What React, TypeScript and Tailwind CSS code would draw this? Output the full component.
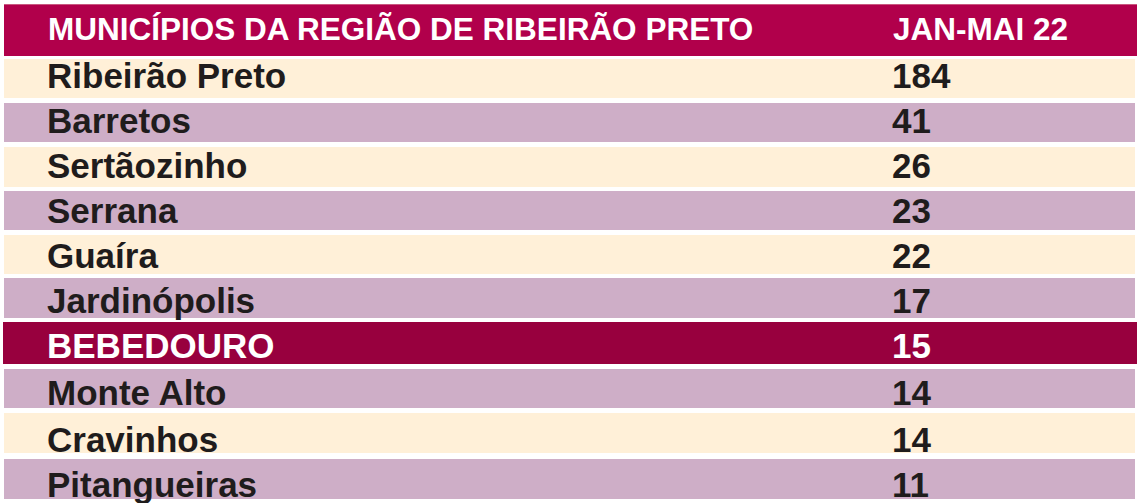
type Row = {
  name: string;
  value: number;
  box: string;
  text: string;
  highlight?: boolean;
};

// row geometry follows the scanned table, which is not perfectly regular
const rows: Row[] = [
  { name: 'Ribeirão Preto', value: 184, box: 'mt-[3px] h-[39px] bg-[#fff0d8]', text: 'pt-0' },
  { name: 'Barretos', value: 41, box: 'mt-[5px] h-[39px] bg-[#ceaec7]', text: 'pt-px' },
  { name: 'Sertãozinho', value: 26, box: 'mt-[5px] h-[40px] bg-[#fff0d8]', text: 'pt-0.5' },
  { name: 'Serrana', value: 23, box: 'mt-[4px] h-[39px] bg-[#ceaec7]', text: 'pt-[3px]' },
  { name: 'Guaíra', value: 22, box: 'mt-[5px] h-[39px] bg-[#fff0d8]', text: 'pt-1' },
  { name: 'Jardinópolis', value: 17, box: 'mt-[4px] h-[40px] bg-[#ceaec7]', text: 'pt-1.5' },
  { name: 'BEBEDOURO', value: 15, box: 'mt-[4px] h-[42px] bg-[#98003e]', text: 'pt-[7px]', highlight: true },
  { name: 'Monte Alto', value: 14, box: 'mt-[5px] h-[39px] bg-[#ceaec7]', text: 'pt-[7px]' },
  { name: 'Cravinhos', value: 14, box: 'mt-[5px] h-[40px] bg-[#fff0d8]', text: 'pt-2.5' },
  { name: 'Pitangueiras', value: 11, box: 'mt-[6px] h-[40px] bg-[#ceaec7]', text: 'pt-[9px]' },
];

export default function App() {
  return (
    <div className="w-[1138px] h-[503px] bg-white overflow-hidden font-['Liberation_Sans',Arial,sans-serif] font-bold">
      <div className="flex flex-col">
        <div className="mt-[4px] ml-[4px] w-[1133px] h-[52px] bg-[#b1004b] border-t border-[#c9577f] grid grid-cols-[845px_1fr] pl-[44px] text-white text-[31.5px] leading-[48px]">
          <div>MUNICÍPIOS DA REGIÃO DE RIBEIRÃO PRETO</div>
          <div>JAN-MAI 22</div>
        </div>

        {rows.map(row => (
          <div
            key={row.name}
            className={
              row.highlight
                ? `${row.box} ml-[3px] w-[1134px] grid grid-cols-[845px_1fr] pl-[44px] text-white`
                : `${row.box} ml-[4px] w-[1131px] grid grid-cols-[845px_1fr] pl-[43px] text-[#1f1c1c]`
            }
          >
            <div className={`${row.text} text-[35px] leading-[34px] whitespace-nowrap`}>{row.name}</div>
            <div className={`${row.text} text-[35px] leading-[34px]`}>{row.value}</div>
          </div>
        ))}
      </div>
    </div>
  );
}
